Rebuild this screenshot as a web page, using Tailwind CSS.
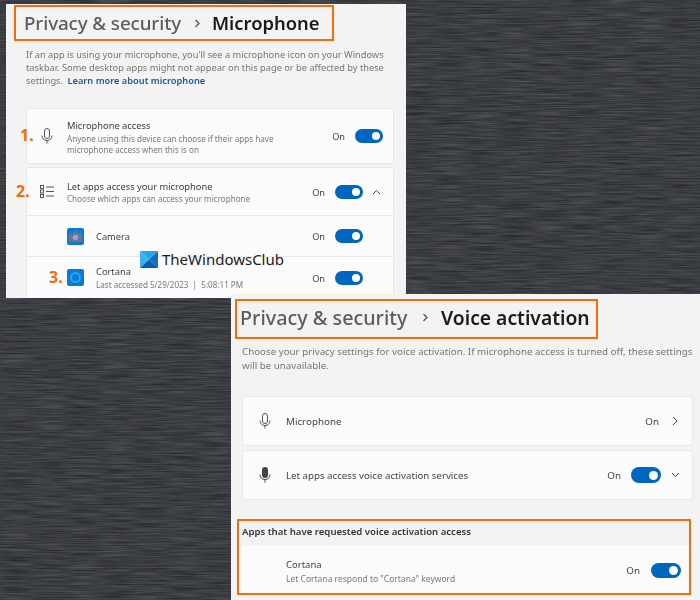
<!DOCTYPE html>
<html lang="en">
<head>
  <meta charset="UTF-8">
  <title>Microphone and voice activation settings</title>
  <script src="https://cdn.jsdelivr.net/npm/@tailwindcss/browser@4"></script>
</head>
<body class="relative w-[700px] h-[600px] overflow-hidden bg-[#3b3e42] font-['Noto_Sans',sans-serif] text-[#1b1b1b]">
  <!-- desktop wallpaper -->
  <svg class="absolute inset-0" width="700" height="600">
    <filter id="streaks" color-interpolation-filters="sRGB" x="0" y="0" width="100%" height="100%">
      <feTurbulence type="fractalNoise" baseFrequency="0.03 0.7" numOctaves="2" seed="4"/>
      <feColorMatrix values="0.22 0 0 0 0.12  0.22 0 0 0 0.13  0.22 0 0 0 0.15  0 0 0 0 1"/>
    </filter>
    <rect width="700" height="600" filter="url(#streaks)"/>
  </svg>

  <!-- microphone window -->
  <section class="absolute left-[6px] top-[4px] w-[400px] h-[294px] overflow-hidden bg-[#f3f3f3] blur-[0.3px]">
    <div class="ml-[8px] mt-[1px] flex h-[36px] w-[320px] items-center border-2 border-[#f76b0c] pl-[8px] text-[18.8px] leading-none whitespace-nowrap">
      <span class="w-[157px] shrink-0 text-[#5d5d5d] font-medium tracking-[-0.1px]">Privacy &amp; security</span>
      <svg class="ml-[13px] shrink-0" width="7" height="9" viewBox="0 0 7 9" fill="none" stroke="#555" stroke-width="1.3"><path d="M1.5 1l3.5 3.5L1.5 8"/></svg>
      <span class="ml-[11px] text-[18.4px] font-semibold">Microphone</span>
    </div>
    <p class="ml-[20px] mt-[7px] w-[375px] text-[9.25px] leading-[13px] text-[#767676] whitespace-nowrap">
      If an app is using your microphone, you'll see a microphone icon on your Windows<br>
      taskbar. Some desktop apps might not appear on this page or be affected by these<br>
      settings. <a class="ml-[2px] font-semibold text-[#1f5aa0]">Learn more about microphone</a>
    </p>
    <div class="ml-[20px] mt-[21px] flex h-[56px] w-[368px] items-center rounded-[3px] border border-[#e8e8e8] bg-[#fbfbfb]">
      <svg class="ml-[13px] w-[14px]" width="14" height="16" viewBox="0 0 14 16" fill="none" stroke="#555" stroke-width="1"><rect x="4.5" y="0.5" width="5" height="10" rx="2.5"/><path d="M2 7.5c0 3 2 5 5 5s5-2 5-5M7 12.5v3"/></svg>
      <div class="ml-[13px] flex-1 pt-[1px]">
        <div class="text-[9.3px] leading-[13px] text-[#3c3c3c]">Microphone access</div>
        <div class="mt-[1px] text-[8.1px] leading-[11px] text-[#7a7a7a]">Anyone using this device can choose if their apps have<br>microphone access when this is on</div>
      </div>
      <span class="pt-[2px] text-[9.2px] text-[#444]">On</span>
      <span class="ml-[10px] mr-[10px] flex h-[14px] w-[28px] items-center justify-end rounded-full bg-[#0067c0] pr-[3px]"><span class="size-[8px] rounded-full bg-white"></span></span>
    </div>
    <div class="ml-[20px] mt-[3px] w-[368px] rounded-t-[3px] border border-[#e8e8e8] bg-[#fbfbfb]">
      <div class="flex h-[48px] items-center border-b border-[#e8e8e8]">
        <svg class="ml-[13px] w-[14px]" width="14" height="13" viewBox="0 0 14 13" fill="none" stroke="#555" stroke-width="1"><rect x="0.5" y="0.5" width="3" height="3"/><rect x="0.5" y="5" width="3" height="3"/><rect x="0.5" y="9.5" width="3" height="3"/><path d="M6 2h8M6 6.5h8M6 11h8"/></svg>
        <div class="ml-[13px] flex-1 pt-[1px]">
          <div class="text-[9.3px] leading-[13px] text-[#3c3c3c]">Let apps access your microphone</div>
          <div class="text-[8.1px] leading-[12px] text-[#7a7a7a]">Choose which apps can access your microphone</div>
        </div>
        <span class="pt-[2px] text-[9.2px] text-[#444]">On</span>
        <span class="ml-[10px] flex h-[14px] w-[28px] items-center justify-end rounded-full bg-[#0067c0] pr-[3px]"><span class="size-[8px] rounded-full bg-white"></span></span>
        <svg class="ml-[9px] mr-[12px]" width="9" height="6" viewBox="0 0 9 6" fill="none" stroke="#444" stroke-width="1"><path d="M1 5l3.5-3.5L8 5"/></svg>
      </div>
      <div class="flex h-[41px] items-center border-b border-[#e8e8e8]">
        <span class="ml-[40px] flex size-[17px] items-center justify-center rounded-[2px] bg-[#0a7ad6]">
          <svg width="13" height="11" viewBox="0 0 13 11"><rect y="2" width="13" height="9" rx="1" fill="#6b7480"/><rect x="4" width="5" height="3" fill="#6b7480"/><circle cx="6.5" cy="6.5" r="2.8" fill="#a09ae8"/></svg>
        </span>
        <span class="ml-[12px] flex-1 pt-[1px] text-[9.3px] text-[#444]">Camera</span>
        <span class="pt-[2px] text-[9.2px] text-[#444]">On</span>
        <span class="ml-[10px] mr-[30px] flex h-[14px] w-[28px] items-center justify-end rounded-full bg-[#0067c0] pr-[3px]"><span class="size-[8px] rounded-full bg-white"></span></span>
      </div>
      <div class="flex h-[41px] items-center">
        <span class="ml-[40px] flex size-[17px] items-center justify-center rounded-[2px] bg-[#0a7ad6]"><span class="size-[11px] rounded-full border-2 border-[#22a7f0]"></span></span>
        <div class="ml-[12px] flex-1 pt-[1px]">
          <div class="text-[9.3px] leading-[13px] text-[#444]">Cortana</div>
          <div class="text-[8.1px] leading-[13px] text-[#7a7a7a]">Last accessed 5/29/2023 &nbsp;|&nbsp; 5:08:11 PM</div>
        </div>
        <span class="pt-[2px] text-[9.2px] text-[#444]">On</span>
        <span class="ml-[10px] mr-[30px] flex h-[14px] w-[28px] items-center justify-end rounded-full bg-[#0067c0] pr-[3px]"><span class="size-[8px] rounded-full bg-white"></span></span>
      </div>
    </div>
  </section>

  <!-- annotation numbers -->
  <span class="absolute left-[20px] top-[125px] text-[16px] leading-[20px] font-bold text-[#f76b0c]">1.</span>
  <span class="absolute left-[16px] top-[181px] text-[16px] leading-[20px] font-bold text-[#f76b0c]">2.</span>
  <span class="absolute left-[49px] top-[267px] text-[16px] leading-[20px] font-bold text-[#f76b0c]">3.</span>

  <!-- watermark -->
  <div class="absolute left-[140px] top-[251px] flex items-center">
    <svg width="18" height="17" viewBox="0 0 18 17"><path d="M0 0h18L9 8.5z" fill="#2aa6e0"/><path d="M0 0l9 8.5L0 17z" fill="#38b6ea"/><path d="M18 0v17L9 8.5z" fill="#0c6fc4"/><path d="M0 17h18L9 8.5z" fill="#0a5fb4"/></svg>
    <span class="ml-[4px] text-[15px] leading-[17px] text-[#1a1a1a]">TheWindowsClub</span>
  </div>

  <!-- voice activation window -->
  <section class="absolute left-[231px] top-[294px] w-[469px] h-[306px] overflow-hidden bg-[#f3f3f3] blur-[0.3px]">
    <div class="ml-[4px] mt-[5px] flex h-[40px] w-[363px] items-center border-2 border-[#f76b0c] pb-[3px] pl-[3px] text-[19.8px] leading-none whitespace-nowrap">
      <span class="w-[167px] shrink-0 text-[#5d5d5d] font-medium">Privacy &amp; security</span>
      <svg class="ml-[15px] shrink-0" width="7" height="9" viewBox="0 0 7 9" fill="none" stroke="#555" stroke-width="1.3"><path d="M1.5 1l3.5 3.5L1.5 8"/></svg>
      <span class="ml-[12px] text-[19.3px] font-semibold">Voice activation</span>
    </div>
    <p class="ml-[11px] mt-[6px] text-[9.75px] leading-[14px] text-[#767676] whitespace-nowrap">
      Choose your privacy settings for voice activation. If microphone access is turned off, these settings<br>
      will be unavailable.
    </p>
    <div class="ml-[11px] mt-[23px] flex h-[50px] w-[451px] items-center rounded-[3px] border border-[#e8e8e8] bg-[#fbfbfb]">
      <svg class="ml-[15px] w-[14px]" width="14" height="16" viewBox="0 0 14 16" fill="none" stroke="#555" stroke-width="1"><rect x="4.5" y="0.5" width="5" height="10" rx="2.5"/><path d="M2 7.5c0 3 2 5 5 5s5-2 5-5M7 12.5v3"/></svg>
      <span class="ml-[14px] flex-1 pt-[2px] text-[9.8px] text-[#444]">Microphone</span>
      <span class="pt-[2px] text-[9.8px] text-[#444]">On</span>
      <svg class="ml-[13px] mr-[14px]" width="6" height="10" viewBox="0 0 6 10" fill="none" stroke="#444" stroke-width="1"><path d="M1 1l4 4-4 4"/></svg>
    </div>
    <div class="ml-[11px] mt-[4px] flex h-[50px] w-[451px] items-center rounded-[3px] border border-[#e8e8e8] bg-[#fbfbfb]">
      <svg class="ml-[15px] w-[14px]" width="14" height="16" viewBox="0 0 14 16" fill="none" stroke="#444" stroke-width="1"><rect x="4" y="0" width="6" height="11" rx="3" fill="#444" stroke="none"/><path d="M2 7.5c0 3 2 5 5 5s5-2 5-5M7 12.5v3"/></svg>
      <span class="ml-[14px] flex-1 pt-[3px] text-[9.7px] text-[#444]">Let apps access voice activation services</span>
      <span class="pt-[3px] text-[9.8px] text-[#444]">On</span>
      <span class="ml-[10px] flex h-[16px] w-[30px] items-center justify-end rounded-full bg-[#0067c0] pr-[3px]"><span class="size-[9px] rounded-full bg-white"></span></span>
      <svg class="ml-[10px] mr-[12px]" width="9" height="6" viewBox="0 0 9 6" fill="none" stroke="#444" stroke-width="1"><path d="M1 1l3.5 3.5L8 1"/></svg>
    </div>
    <div class="ml-[6px] mt-[19px] h-[76px] w-[454px] overflow-hidden border-2 border-[#f76b0c]">
      <div class="ml-[3px] h-[24px] text-[9.6px] leading-[22px] font-semibold text-[#333]">Apps that have requested voice activation access</div>
      <div class="ml-[3px] flex h-[50px] items-center rounded-tl-[3px] bg-[#fbfbfb]">
        <div class="ml-[44px] flex-1 pt-[2px]">
          <div class="text-[9.5px] leading-[15px] text-[#444]">Cortana</div>
          <div class="text-[8.5px] leading-[13px] text-[#7a7a7a]">Let Cortana respond to "Cortana" keyword</div>
        </div>
        <span class="pt-[3px] text-[9.8px] text-[#444]">On</span>
        <span class="ml-[11px] mr-[8px] flex h-[15px] w-[30px] items-center justify-end rounded-full bg-[#0067c0] pr-[3px]"><span class="size-[9px] rounded-full bg-white"></span></span>
      </div>
    </div>
  </section>
</body>
</html>
